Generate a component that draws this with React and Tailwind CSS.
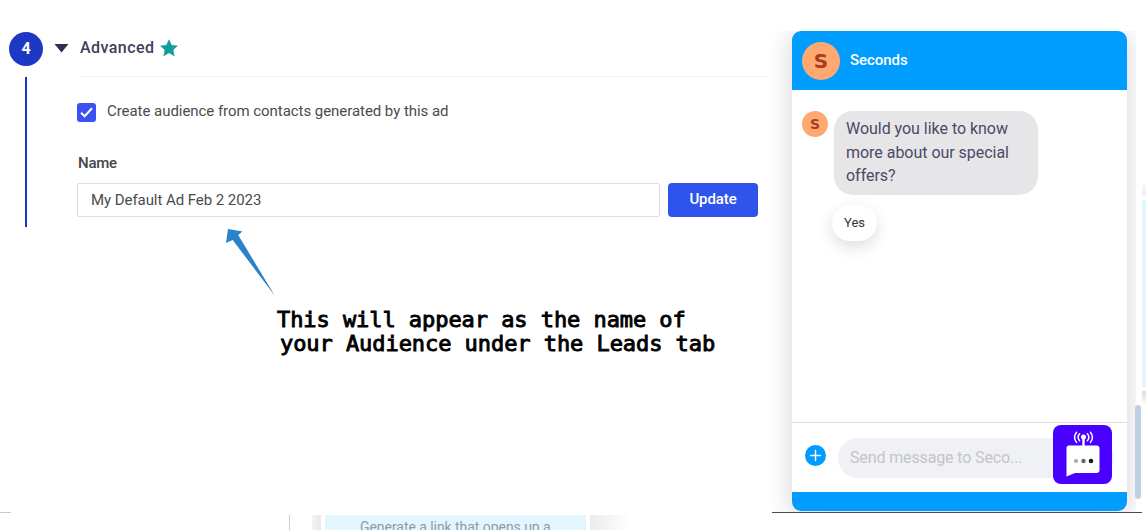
import { Plus } from 'lucide-react'

const MESSAGE = ['Would you like to know', 'more about our special', 'offers?']

function Star() {
  return (
    <svg width="18" height="18" viewBox="0 0 18 18" className="ml-[5px]">
      <path
        d="M9 0.8 L11.5 6.3 L17.3 6.9 L13 10.9 L14.2 16.8 L9 13.8 L3.8 16.8 L5 10.9 L0.7 6.9 L6.5 6.3 Z"
        fill="#0f9d9d"
        stroke="#0f9d9d"
        strokeWidth="0.6"
      />
    </svg>
  )
}

function BotIcon() {
  return (
    <svg width="59" height="59" viewBox="0 0 59 59">
      <rect width="59" height="59" rx="8" fill="#4a00ff" />
      <g fill="none" stroke="#fff" strokeWidth="1.5" strokeLinecap="round">
        <path d="M26.6 8.8 Q23.6 12.2 26.6 15.8" />
        <path d="M23.6 7.2 Q19.4 12.2 23.6 17.4" />
        <path d="M34.4 8.8 Q37.4 12.2 34.4 15.8" />
        <path d="M37.4 7.2 Q41.6 12.2 37.4 17.4" />
      </g>
      <circle cx="30.5" cy="12" r="2.5" fill="#fff" />
      <path d="M30.5 12 V21" stroke="#fff" strokeWidth="2.4" />
      <path
        d="M16 20.5 H43.5 Q46.5 20.5 46.5 23.5 V45 Q46.5 48 43.5 48 H22 L13.5 51.5 V23 Q13.5 20.5 16 20.5 Z"
        fill="#fff"
      />
      <circle cx="23" cy="36" r="2.1" fill="#aaa" />
      <circle cx="30.5" cy="36" r="2.2" fill="#666" />
      <circle cx="38" cy="36" r="2.3" fill="#1c1c1c" />
    </svg>
  )
}

function AdvancedStep() {
  return (
    <section className="relative w-[768px] shrink-0 flex">
      <div className="w-[52px] pl-[9px] pt-[32px]">
        <div className="size-[34px] rounded-full bg-[#1d38c5] text-white text-base font-bold flex items-center justify-center">
          4
        </div>
        <div className="ml-4 mt-[11px] w-0.5 h-[150px] bg-[#1d38c5]" />
      </div>

      <div className="flex-1">
        <div className="h-[76px] pt-[19px] flex items-center">
          <svg width="16" height="10" viewBox="0 0 16 10" className="ml-[1px]">
            <path d="M1.5 1 H15.5 L8.5 9.5 Z" fill="#302d4e" />
          </svg>
          <h2 className="ml-[11px] text-base leading-6 font-medium tracking-[0.45px] text-[#403e5a]">Advanced</h2>
          <Star />
        </div>
        <div className="ml-7 h-px bg-[#f1f1f2]" />

        <div className="pl-[25px]">
          <label className="mt-[22px] h-6 flex items-center">
            <span className="size-[19px] rounded-[3px] bg-[#3c50f3] mt-0.5 flex items-center justify-center">
              <svg width="15" height="13" viewBox="0 0 15 13">
                <path d="M2 6.8 L5.6 10.3 L13 2.3" fill="none" stroke="#fff" strokeWidth="2" />
              </svg>
            </span>
            <span className="ml-[11px] text-[15px] tracking-[-0.05px] text-[#4b4b4b]">
              Create audience from contacts generated by this ad
            </span>
          </label>

          <p className="mt-[28px] pl-px text-[15px] leading-6 font-medium tracking-[-0.25px] text-[#444]">Name</p>
          <div className="mt-[8px] flex gap-2">
            <div className="w-[583px] h-[34px] border border-[#dedede] rounded-[2px] pl-[13px] flex items-center text-[15px] tracking-[-0.06px] text-[#4b4b4b]">
              My Default Ad Feb 2 2023
            </div>
            <button className="w-[90px] h-[34px] rounded-[4px] bg-[#2f54eb] text-white text-[15px] font-medium tracking-[-0.1px] pb-0.5">
              Update
            </button>
          </div>
        </div>
      </div>

      {/* annotation over the free area */}
      <svg width="52" height="70" viewBox="0 0 52 70" className="absolute left-[225px] top-[227px]">
        <path d="M3 2 L17.5 4.5 L13.2 8 L50 69 L7.7 13 L1 16 Z" fill="#2a82c9" />
      </svg>
      <p className="absolute left-[277px] top-[308px] whitespace-pre font-['DejaVu_Sans_Mono',monospace] text-[22px] leading-6 text-black tracking-[-0.06px] [-webkit-text-stroke:0.9px_black]">
        This will appear as the name of
        <span className="block pl-[3px]">your Audience under the Leads tab</span>
      </p>
    </section>
  )
}

function ChatPreview() {
  return (
    <section className="w-[335px] h-[480px] rounded-[9px] bg-white shadow-[0_4px_24px_2px_rgba(40,40,60,0.18)] overflow-hidden flex flex-col">
      <header className="h-[59px] shrink-0 bg-[#009dff] flex items-center pl-[10px]">
        <div className="size-[38px] rounded-full bg-[#ffa970] text-[#a63f1e] font-['DejaVu_Sans',sans-serif] text-[20px] font-bold flex items-center justify-center">
          S
        </div>
        <span className="ml-[10px] text-[15px] font-medium tracking-[-0.05px] text-white">Seconds</span>
      </header>

      <div className="flex-1 pl-[10px] pt-[21px]">
        <div className="flex">
          <div className="size-[26px] rounded-full bg-[#ffa970] text-[#a63f1e] font-['DejaVu_Sans',sans-serif] text-[14px] font-bold flex items-center justify-center">
            S
          </div>
          <div className="ml-[6px] w-[204px] h-[84px] rounded-[19px] bg-[#e6e6e9] pl-3 pt-[6px] text-base leading-[23.5px] tracking-[-0.03px] text-[#4b4965]">
            {MESSAGE.map(line => (
              <p key={line}>{line}</p>
            ))}
          </div>
        </div>
        <div className="ml-[30px] mt-[10px] w-[45px] h-9 rounded-[18px] bg-white shadow-[0_6px_16px_rgba(0,0,0,0.13)] text-[13px] text-[#333] flex items-center justify-center">
          Yes
        </div>
      </div>

      <div className="h-[70px] shrink-0 border-t border-[#dedee0] flex items-center pl-[13px]">
        <div className="size-[21px] mb-[4px] rounded-full bg-[#009dff] text-white flex items-center justify-center">
          <Plus size={17} strokeWidth={2} />
        </div>
        <div className="relative ml-[12px] w-[276px] h-10 rounded-full bg-[#f0f1f5] pl-3 flex items-center text-base tracking-[-0.13px] text-[#c4c4c8]">
          Send message to Seco...
          <div className="absolute left-[215px] -top-[13px]">
            <BotIcon />
          </div>
        </div>
      </div>
      <div className="h-[19px] shrink-0 bg-[#009dff]" />
    </section>
  )
}

export default function App() {
  return (
    <div className="w-[1146px] h-[530px] bg-white overflow-hidden font-[Roboto,sans-serif]">
      <div className="h-[512px] flex">
        <AdvancedStep />
        <div className="mt-[31px] w-[368px] h-[481px] shrink-0 pl-6 overflow-hidden">
          <ChatPreview />
        </div>
        {/* edge of the scrolling page */}
        <div className="w-[10px] flex">
          <div className="w-[6px] mt-[405px] h-[94px] -ml-px rounded-full bg-[#bfd0e5]" />
          <div className="ml-[1px] w-1 flex flex-col">
            <div className="mt-[180px] h-4 bg-linear-to-b from-white to-[#eeeeee]" />
            <div className="mt-1 h-[187px] bg-[#e3f5ff]" />
            <div className="mt-1 h-[14px] bg-linear-to-b from-[#dcdcdc] to-white" />
          </div>
        </div>
      </div>

      {/* strip left of the layer below */}
      <div className="h-[18px] flex items-start">
        <div className="w-[11px] h-px bg-[#c9c9cb]" />
        <div className="ml-[278px] mt-[3px] w-px h-[15px] bg-[#c9cad3]" />
        <div className="ml-[22px] mt-[3px] w-[9px] h-[15px] bg-linear-to-r from-[#f4f4f4] to-[#e8e8e8]" />
        <div className="ml-1 mt-[3px] w-[261px] h-[15px] overflow-hidden bg-[#e3f5ff] pl-[35px] text-sm leading-[25px] tracking-[-0.05px] text-[#8f9ca3] whitespace-nowrap">
          Generate a link that opens up a
        </div>
        <div className="ml-1 mt-[3px] w-10 h-[15px] bg-linear-to-r from-[#ebebeb] to-white" />
        <div className="ml-[142px] w-[370px] h-px bg-[#4c4650]" />
      </div>
    </div>
  )
}
